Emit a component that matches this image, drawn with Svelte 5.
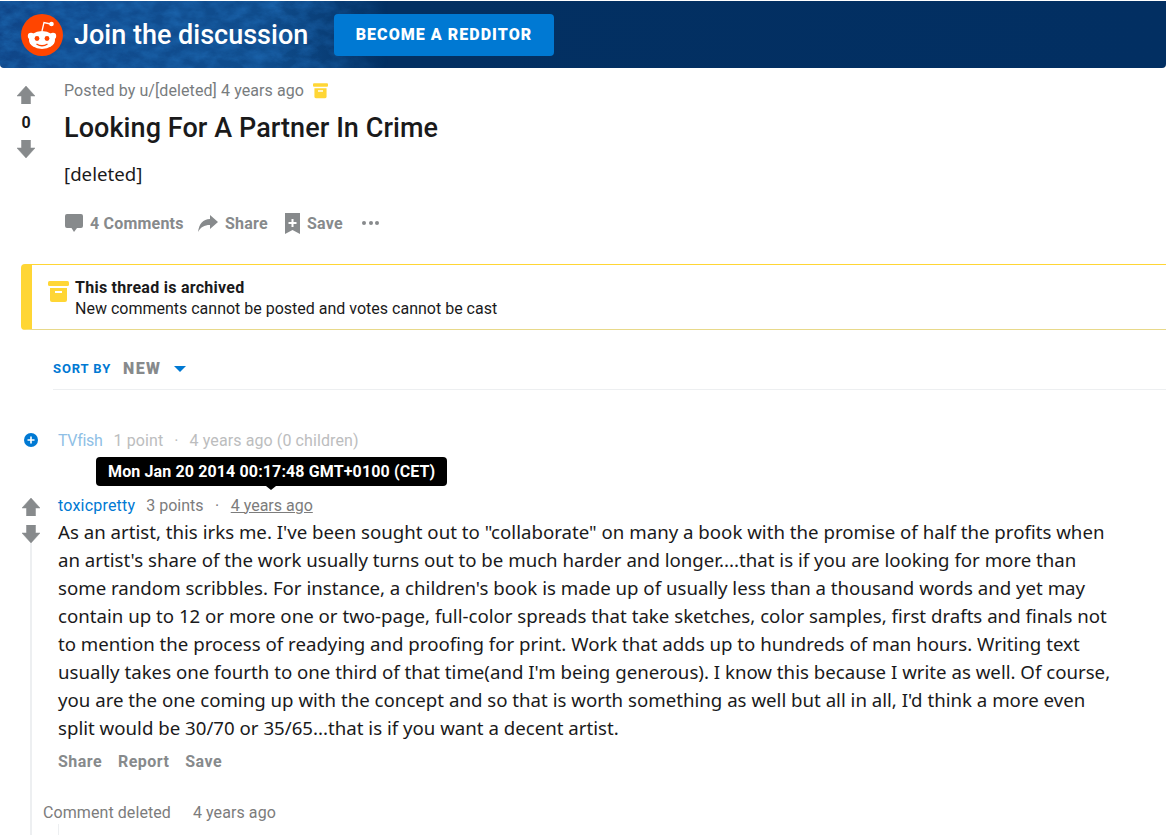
<script lang="ts">
	const actions = ['Share', 'Report', 'Save'];
	const bodyLines = [
		`As an artist, this irks me. I've been sought out to "collaborate" on many a book with the promise of half the profits when`,
		`an artist's share of the work usually turns out to be much harder and longer....that is if you are looking for more than`,
		`some random scribbles. For instance, a children's book is made up of usually less than a thousand words and yet may`,
		`contain up to 12 or more one or two-page, full-color spreads that take sketches, color samples, first drafts and finals not`,
		`to mention the process of readying and proofing for print. Work that adds up to hundreds of man hours. Writing text`,
		`usually takes one fourth to one third of that time(and I'm being generous). I know this because I write as well. Of course,`,
		`you are the one coming up with the concept and so that is worth something as well but all in all, I'd think a more even`,
		`split would be 30/70 or 35/65...that is if you want a decent artist.`
	];
</script>

{#snippet up(cls)}
	<svg class={cls} viewBox="0 0 18 18"><path d="M9 0 L18 10 H13.5 V18 H4.5 V10 H0 Z" fill="#878a8c" stroke="#878a8c" stroke-width="0.5" stroke-linejoin="round" /></svg>
{/snippet}

{#snippet down(cls)}
	<svg class={cls} viewBox="0 0 18 18"><path d="M9 18 L18 8 H13.5 V0 H4.5 V8 H0 Z" fill="#878a8c" stroke="#878a8c" stroke-width="0.5" stroke-linejoin="round" /></svg>
{/snippet}

{#snippet archive(cls)}
	<svg class={cls} viewBox="0 0 21 22">
		<rect x="0" y="0" width="21" height="5" rx="1.5" fill="#ffd635" />
		<path d="M2 7 H19 V19 a2 2 0 0 1 -2 2 H4 a2 2 0 0 1 -2 -2 Z" fill="#ffd635" />
		<rect x="7" y="10" width="7" height="2" fill="#fff" />
	</svg>
{/snippet}

<div class="page">
	<header class="banner">
		<svg class="texture" width="400" height="67">
			<defs>
				<filter id="mottle" x="0" y="0" width="100%" height="100%" color-interpolation-filters="sRGB">
					<feTurbulence type="fractalNoise" baseFrequency="0.06 0.1" numOctaves="5" seed="7" />
					<feColorMatrix type="matrix" values="0 0 0 0 0.1  0 0 0 0 0.38  0 0 0 0 0.66  1.8 0 0 0 -0.55" />
				</filter>
				<linearGradient id="fade">
					<stop offset="0.7" stop-color="#fff" />
					<stop offset="0.97" stop-color="#000" />
				</linearGradient>
				<mask id="fade-mask"><rect width="400" height="67" fill="url(#fade)" /></mask>
			</defs>
			<g mask="url(#fade-mask)"><rect width="400" height="67" filter="url(#mottle)" /></g>
		</svg>
		<svg class="logo" viewBox="0 0 42 42">
			<circle cx="21" cy="21" r="21" fill="#ff4500" />
			<circle cx="10" cy="22" r="3.2" fill="#fff" />
			<circle cx="32" cy="22" r="3.2" fill="#fff" />
			<ellipse cx="21" cy="26" rx="13" ry="9" fill="#fff" />
			<path d="M21 17 L23 8.5 L29.5 10" fill="none" stroke="#fff" stroke-width="1.3" />
			<circle cx="30.5" cy="10" r="2.3" fill="#fff" />
			<circle cx="16" cy="24.5" r="2.4" fill="#ff4500" />
			<circle cx="26" cy="24.5" r="2.4" fill="#ff4500" />
			<path d="M15.5 30 Q21 33.5 26.5 30" fill="none" stroke="#ff4500" stroke-width="1.4" />
		</svg>
		<h1>Join the discussion</h1>
		<span class="become">BECOME A REDDITOR</span>
	</header>

	<section class="post">
		<div class="votes">
			{@render up('arrow')}
			<b>0</b>
			{@render down('arrow')}
		</div>
		<div class="post-main">
			<div class="post-meta">
				<span>Posted by u/[deleted] 4 years ago</span>
				{@render archive('meta-box')}
			</div>
			<h2>Looking For A Partner In Crime</h2>
			<p class="deleted">[deleted]</p>
			<div class="post-actions">
				<span class="act comments">
					<svg class="ic-comment" viewBox="0 0 18 19"><path d="M2 0 H16 a2 2 0 0 1 2 2 V12 a2 2 0 0 1 -2 2 H12 L9 18 L6.5 14 H2 a2 2 0 0 1 -2 -2 V2 a2 2 0 0 1 2 -2 Z" fill="#878a8c" /></svg>
					4 Comments
				</span>
				<span class="act share">
					<svg class="ic-share" viewBox="0 0 20 17"><path d="M12 0 L20 7 L12 14 V10 C6 10 3 12 0 17 C1 9 5 4 12 4 Z" fill="#878a8c" /></svg>
					Share
				</span>
				<span class="act save">
					<svg class="ic-save" viewBox="0 0 15 21"><path d="M0 0 H15 V21 L7.5 17 L0 21 Z" fill="#878a8c" /><path d="M6.5 6 H8.5 V9 H11.5 V11 H8.5 V14 H6.5 V11 H3.5 V9 H6.5 Z" fill="#fff" /></svg>
					Save
				</span>
				<span class="dots"><i></i><i></i><i></i></span>
			</div>
		</div>
	</section>

	<div class="notice">
		{@render archive('notice-box')}
		<div>
			<strong>This thread is archived</strong>
			<div>New comments cannot be posted and votes cannot be cast</div>
		</div>
	</div>

	<div class="sort">
		<span class="sort-label">SORT BY</span>
		<span class="sort-value">NEW</span>
		<svg class="caret" viewBox="0 0 12 6"><path d="M0 0 H12 L6 6 Z" fill="#0079d3" /></svg>
	</div>

	<div class="collapsed">
		<svg class="plus" viewBox="0 0 14 14">
			<circle cx="7" cy="7" r="7" fill="#0079d3" />
			<path d="M3.5 7 H10.5 M7 3.5 V10.5" stroke="#fff" stroke-width="1.6" />
		</svg>
		<span class="c-user">TVfish</span>
		<span class="c-info">1 point</span>
		<span class="c-info dot">·</span>
		<span class="c-info">4 years ago (0 children)</span>
	</div>

	<div class="comment">
		<div class="rail">
			{@render up('arrow')}
			{@render down('arrow')}
			<div class="thread-line"></div>
		</div>
		<div class="comment-main">
			<div class="comment-meta">
				<span class="tip">Mon Jan 20 2014 00:17:48 GMT+0100 (CET)</span>
				<span class="author">toxicpretty</span>
				<span>3 points</span>
				<span class="sep">·</span>
				<span class="age">4 years ago</span>
			</div>
			<div class="body">
				{#each bodyLines as line}
					<div>{line}</div>
				{/each}
			</div>
			<div class="comment-actions">
				{#each actions as a}
					<span>{a}</span>
				{/each}
			</div>
			<div class="deleted-comment">
				<span>Comment deleted</span>
				<span>4 years ago</span>
			</div>
			<div class="nested-line"></div>
		</div>
	</div>
</div>

<style>
	:global(body) {
		margin: 0;
		background: #fff;
	}

	.page {
		width: 1166px;
		height: 835px;
		overflow: hidden;
		font-family: 'Roboto', 'Liberation Sans', sans-serif;
		color: #1a1a1b;
	}

	.banner {
		position: relative;
		height: 67px;
		margin-top: 1px;
		box-sizing: border-box;
		display: flex;
		align-items: center;
		padding-left: 21px;
		border-radius: 0 0 4px 4px;
		overflow: hidden;
		background: linear-gradient(90deg, #0f4486 0%, #114c90 60px, #0f4c8c 270px, #033062 385px, #022f62 100%);
	}

	.texture {
		position: absolute;
		left: 0;
		top: 0;
	}

	.logo {
		position: relative;
		width: 42px;
		height: 42px;
		flex-shrink: 0;
	}

	h1 {
		position: relative;
		margin: 0 0 0 11px;
		font-size: 27px;
		font-weight: 500;
		color: #fff;
		white-space: nowrap;
		width: 260px;
	}

	.become {
		position: relative;
		width: 220px;
		height: 42px;
		display: flex;
		align-items: center;
		justify-content: center;
		background: #0079d3;
		border-radius: 4px;
		color: #fff;
		font-size: 16px;
		font-weight: 900;
		letter-spacing: 1.05px;
	}

	.post {
		display: flex;
		height: 196px;
	}

	.votes {
		width: 52px;
		padding: 18px 0 0 0;
		box-sizing: border-box;
		display: flex;
		flex-direction: column;
		align-items: center;
		flex-shrink: 0;
	}

	.arrow {
		width: 18px;
		height: 18px;
		display: block;
	}

	.votes b {
		font-size: 16px;
		color: #1a1a1b;
		height: 36px;
		display: flex;
		align-items: center;
	}

	.post-main {
		padding-left: 12px;
		flex: 1;
	}

	.post-meta {
		display: flex;
		align-items: center;
		gap: 9px;
		height: 17px;
		margin-top: 14px;
		font-size: 16px;
		letter-spacing: 0.09px;
		color: #787c7e;
	}

	.meta-box {
		width: 15px;
		height: 16px;
	}

	h2 {
		margin: 12px 0 0;
		font-size: 27px;
		line-height: 34px;
		font-weight: 500;
		letter-spacing: 0.07px;
		color: #1a1a1b;
	}

	.deleted {
		margin: 17px 0 0;
		font-size: 18.66px;
		line-height: 24px;
		font-family: 'Noto Sans', sans-serif;
	}

	.post-actions {
		display: flex;
		align-items: center;
		margin-top: 26px;
		height: 22px;
		font-size: 16px;
		font-weight: 700;
		color: #878a8c;
		letter-spacing: 0.2px;
	}

	.act {
		display: flex;
		align-items: center;
		gap: 7px;
	}

	.comments { width: 133px; margin-left: 1px; }
	.share { width: 87px; }
	.save { width: 77px; }

	.ic-comment { width: 18px; height: 19px; }
	.ic-share { width: 20px; height: 17px; }
	.ic-save { width: 15px; height: 21px; }

	.dots {
		display: flex;
		gap: 2.5px;
	}

	.dots i {
		width: 4px;
		height: 4px;
		border-radius: 50%;
		background: #878a8c;
	}

	.notice {
		margin-left: 21px;
		height: 66px;
		box-sizing: border-box;
		border: 1px solid #ffd635;
		border-left: 11px solid #ffd635;
		border-right: 0;
		border-bottom-color: #e8d98a;
		border-radius: 4px 0 0 4px;
		display: flex;
		padding: 12px 0 0 16px;
		gap: 6px;
		font-size: 16px;
		line-height: 21px;
		color: #1a1a1b;
	}

	.notice strong {
		font-weight: 700;
		letter-spacing: 0.26px;
	}

	.notice-box {
		width: 21px;
		height: 22px;
		margin-top: 4px;
	}

	.sort {
		margin: 0 0 0 53px;
		height: 60px;
		padding-top: 18px;
		box-sizing: border-box;
		border-bottom: 1px solid #edeff1;
		display: flex;
		align-items: center;
	}

	.sort-label {
		font-size: 13px;
		font-weight: 700;
		color: #0079d3;
		letter-spacing: 0.9px;
		width: 70px;
	}

	.sort-value {
		font-size: 16px;
		font-weight: 900;
		color: #878a8c;
		letter-spacing: 1.4px;
		width: 51px;
	}

	.caret {
		width: 12px;
		height: 6px;
	}

	.collapsed {
		margin-top: 40px;
		height: 20px;
		display: flex;
		align-items: center;
		padding-left: 24px;
		font-size: 16px;
	}

	.plus {
		width: 14px;
		height: 14px;
		margin-right: 20px;
	}

	.c-user {
		color: #8fbfe6;
		margin-right: 11px;
		letter-spacing: -0.3px;
	}

	.c-info {
		color: #bcbdbe;
		letter-spacing: 0.1px;
	}

	.c-info.dot {
		margin: 0 11px;
	}

	.comment {
		display: flex;
		margin-top: 37px;
	}

	.rail {
		width: 58px;
		flex-shrink: 0;
		padding: 11px 0 0 22px;
		box-sizing: border-box;
		position: relative;
	}

	.rail .arrow {
		margin-bottom: 9px;
	}

	.thread-line {
		position: absolute;
		left: 30px;
		top: 56px;
		width: 2px;
		height: 400px;
		background: #edeff1;
	}

	.comment-main {
		flex: 1;
		min-width: 0;
	}

	.comment-meta {
		position: relative;
		display: flex;
		align-items: center;
		height: 20px;
		margin-top: 8px;
		font-size: 16px;
		color: #7c7c7c;
	}

	.author {
		color: #0079d3;
		margin-right: 11px;
		letter-spacing: 0.2px;
	}

	.sep {
		margin: 0 11.5px;
	}

	.age {
		text-decoration: underline;
	}

	.tip {
		position: absolute;
		left: 38px;
		top: -38px;
		width: 351px;
		box-sizing: border-box;
		height: 29px;
		padding: 0 12px;
		display: flex;
		align-items: center;
		background: #000;
		color: #fff;
		border-radius: 4px;
		font-size: 16px;
		font-weight: 700;
		letter-spacing: 0.13px;
		white-space: nowrap;
	}

	.tip::after {
		content: '';
		position: absolute;
		left: 170px;
		bottom: -4px;
		border-left: 5px solid transparent;
		border-right: 5px solid transparent;
		border-top: 4px solid #000;
	}

	.body {
		margin-top: 3px;
		font-family: 'Noto Sans', sans-serif;
		font-size: 18.66px;
		line-height: 28px;
		color: #1a1a1b;
		white-space: nowrap;
	}

	.comment-actions {
		display: flex;
		gap: 16px;
		margin-top: 10px;
		font-size: 16px;
		font-weight: 700;
		color: #878a8c;
		letter-spacing: 0.45px;
	}

	.deleted-comment {
		display: flex;
		gap: 22px;
		margin: 32px 0 0 -15px;
		font-size: 16px;
		letter-spacing: 0.08px;
		color: #7c7c7c;
	}

	.nested-line {
		width: 1px;
		height: 20px;
		margin-top: 2px;
		background: #edeff1;
	}
</style>
